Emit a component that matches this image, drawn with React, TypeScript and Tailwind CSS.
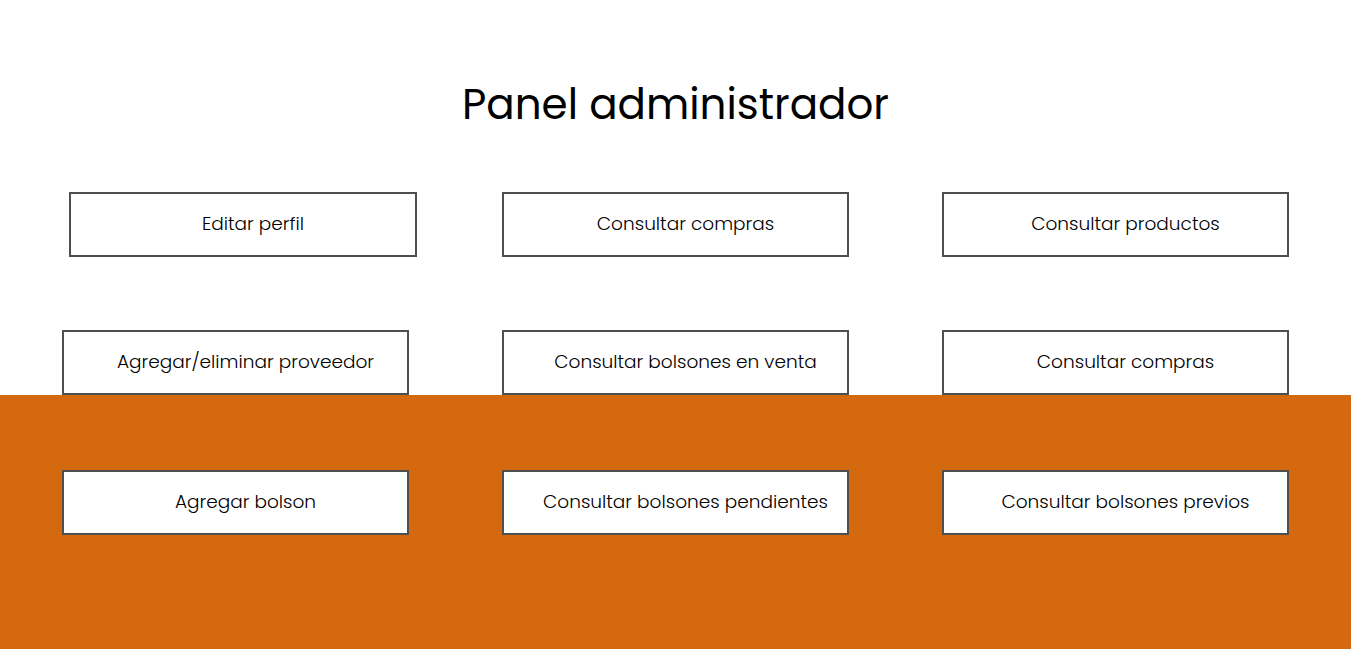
const font = { fontFamily: 'Poppins, "Open Sans", "Noto Sans", sans-serif' };

const Btn = ({ label, className = "" }: { label: string; className?: string }) => (
  <button
    className={`w-[347px] h-[65px] shrink-0 bg-white border-2 border-[#4f4f4f] pl-5 pb-[2px] text-center text-[18.5px] font-light text-black ${className}`}
  >
    {label}
  </button>
);

export default function App() {
  return (
    <div className="w-[1351px] min-h-[649px] bg-white" style={font}>
      {/* Top */}
      <section className="h-[395px] pt-[78px]">
        <h1 className="text-center text-[42px] leading-[54px] text-black">Panel administrador</h1>
        <div className="flex mt-[60px] pl-[62px] gap-[93px]">
          <Btn label="Editar perfil" className="ml-[7px] mr-[-8px] w-[348px]" />
          <Btn label="Consultar compras" />
          <Btn label="Consultar productos" />
        </div>
        <div className="flex mt-[73px] pl-[62px] gap-[93px]">
          <Btn label="Agregar/eliminar proveedor" />
          <Btn label="Consultar bolsones en venta" />
          <Btn label="Consultar compras" />
        </div>
      </section>

      {/* Bottom */}
      <section className="bg-[#d4690f] h-[254px] pt-[75px]">
        <div className="flex pl-[62px] gap-[93px]">
          <Btn label="Agregar bolson" />
          <Btn label="Consultar bolsones pendientes" />
          <Btn label="Consultar bolsones previos" />
        </div>
      </section>
    </div>
  );
}
